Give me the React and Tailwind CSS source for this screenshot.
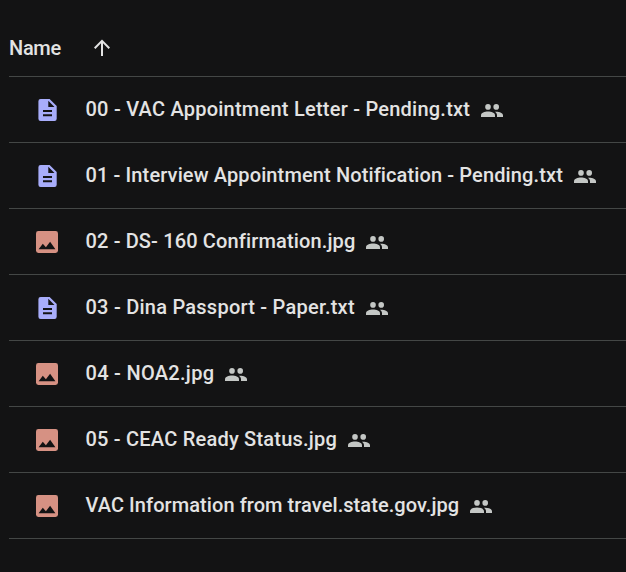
const files = [
  { name: '00 - VAC Appointment Letter - Pending.txt', type: 'text', tracking: 'tracking-[0.235px]' },
  { name: '01 - Interview Appointment Notification - Pending.txt', type: 'text', tracking: 'tracking-[0.12px]' },
  { name: '02 - DS- 160 Confirmation.jpg', type: 'image', tracking: 'tracking-[0.14px]' },
  { name: '03 - Dina Passport - Paper.txt', type: 'text', tracking: 'tracking-[0.24px]' },
  { name: '04 - NOA2.jpg', type: 'image', tracking: 'tracking-[0.29px]' },
  { name: '05 - CEAC Ready Status.jpg', type: 'image', tracking: 'tracking-[0.22px]' },
  { name: 'VAC Information from travel.state.gov.jpg', type: 'image', tracking: 'tracking-[0.07px]' },
]

function ArrowUp() {
  return (
    <svg viewBox="0 0.5 24 24" className="h-6 w-6 fill-[#e3e3e3]">
      <path d="M4 12l1.41 1.41L11 7.83V20.5h2V7.83l5.58 5.59L20 12l-8-8-8 8z" />
    </svg>
  )
}

function TextFileIcon() {
  return (
    <svg viewBox="0 0 22 22" className="size-[22px] shrink-0">
      <path
        fill="#a8adfb"
        fillRule="evenodd"
        d="M4.6 0H13.6L20.7 7V19.8A2.2 2.2 0 0 1 18.5 22H4.6A2.2 2.2 0 0 1 2.4 19.8V2.2A2.2 2.2 0 0 1 4.6 0ZM12.3 1.8V8H18.5ZM7 11V13H16V11ZM7 15.3V17.3H16V15.3Z"
      />
    </svg>
  )
}

function ImageFileIcon() {
  return (
    <svg viewBox="0 0 22 22" className="size-[22px] shrink-0">
      <rect width="22" height="22" rx="2.4" fill="#d69183" />
      <path fill="#131314" d="M2.6 18.2L6.8 12.7L9.9 16.2L14.1 10.8L19.4 18.2Z" />
    </svg>
  )
}

function PeopleIcon() {
  return (
    <svg viewBox="0 0 22 14" className="mt-0.5 ml-[11px] h-3.5 w-[22px] shrink-0 fill-[#c4c7c5]">
      <circle cx="7" cy="2.9" r="2.8" />
      <circle cx="15.2" cy="2.9" r="2.8" />
      <path d="M0 13V11.3C0 8.7 3.6 7.6 7 7.6S14 8.7 14 11.3V13Z" />
      <path d="M13.9 7.7C17.6 7.3 22 8.5 22 11.3V13H16V11.2C16 9.7 15.2 8.6 13.9 7.7Z" />
    </svg>
  )
}

function FileRow({ file }) {
  return (
    <li className="flex h-[66px] items-center border-b border-[#444746] pl-[27px]">
      {file.type === 'text' ? <TextFileIcon /> : <ImageFileIcon />}
      <span className={`mb-0.5 ml-[27.5px] whitespace-nowrap ${file.tracking}`}>{file.name}</span>
      <PeopleIcon />
    </li>
  )
}

export default function App() {
  return (
    <main className="h-[572px] w-full overflow-hidden bg-[#131314] pl-[9px] font-['Roboto',sans-serif] text-[20px] leading-6 font-medium text-[#e3e3e3]">
      <header className="flex h-[77px] items-end border-b border-[#444746] pb-4">
        <span className="w-[81.4px] tracking-[-0.3px]">Name</span>
        <ArrowUp />
      </header>
      <ul>
        {files.map((file) => (
          <FileRow key={file.name} file={file} />
        ))}
      </ul>
    </main>
  )
}
